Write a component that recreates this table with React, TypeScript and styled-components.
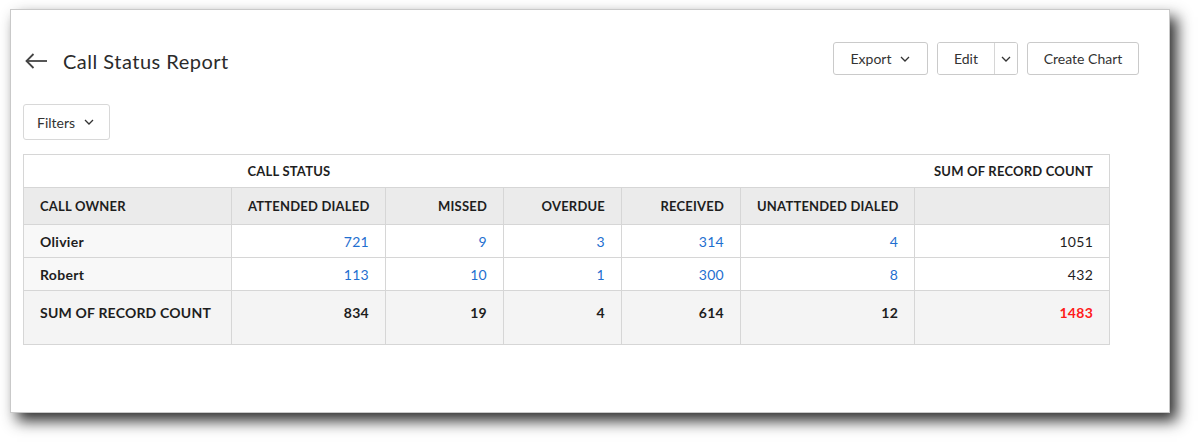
import React from 'react';
import styled, { createGlobalStyle } from 'styled-components';

const GlobalStyle = createGlobalStyle`
  html, body {
    margin: 0;
    padding: 0;
    background: #ffffff;
    font-family: Lato, "Open Sans", Arial, sans-serif;
  }
`;

const Page = styled.div`
  padding: 9px 0 0 10px;
  height: 444px;
  box-sizing: border-box;
  overflow: hidden;
`;

const Card = styled.div`
  width: 1160px;
  height: 404px;
  box-sizing: border-box;
  background: #fff;
  border: 1px solid #c9c9c9;
  box-shadow: 7px 8px 14px rgba(0, 0, 0, 0.82);
  display: flex;
  flex-direction: column;
  padding: 32px 30px 0 12px;
`;

const Header = styled.div`
  display: flex;
  justify-content: space-between;
  align-items: flex-start;
`;

const TitleWrap = styled.div`
  display: flex;
  align-items: center;
  gap: 15px;
  margin-top: 5px;
  height: 28px;
  padding-left: 2px;
`;

const Title = styled.h1`
  margin: 0;
  font-size: 20px;
  font-weight: 400;
  color: #2b2b2b;
  letter-spacing: 0.5px;
`;

const Actions = styled.div`
  display: flex;
  gap: 9px;
`;

const Btn = styled.button<{ $w?: number }>`
  height: 33px;
  width: ${(p) => (p.$w ? `${p.$w}px` : 'auto')};
  box-sizing: border-box;
  border: 1px solid #cacaca;
  border-radius: 3px;
  background: #fff;
  color: #333;
  font-family: inherit;
  font-size: 14px;
  display: flex;
  align-items: center;
  justify-content: center;
  gap: 9px;
  padding: 0;
  cursor: pointer;
`;

const Split = styled.div`
  display: flex;
  height: 33px;
  width: 81px;
  box-sizing: border-box;
  border: 1px solid #cacaca;
  border-radius: 3px;
  overflow: hidden;
`;

const SplitPart = styled.button<{ $w: number; $divider?: boolean }>`
  width: ${(p) => p.$w}px;
  border: none;
  border-left: ${(p) => (p.$divider ? '1px solid #d6d6d6' : 'none')};
  background: #fff;
  color: #333;
  font-family: inherit;
  font-size: 14px;
  display: flex;
  align-items: center;
  justify-content: center;
  padding: 0;
`;

const FilterBtn = styled.button`
  margin-top: 29px;
  width: 87px;
  height: 36px;
  box-sizing: border-box;
  border: 1px solid #d8d8d8;
  border-radius: 3px;
  background: #fff;
  color: #333;
  font-family: inherit;
  font-size: 14px;
  display: flex;
  align-items: center;
  gap: 9px;
  padding: 0 0 0 13px;
`;

const Table = styled.table`
  margin-top: 14px;
  width: 1086px;
  border-collapse: collapse;
  table-layout: fixed;
  border: 1px solid #d6d6d6;
  font-size: 14px;
  color: #1e1e1e;
`;

const Th = styled.th<{ $align?: string; $bordered?: boolean }>`
  height: ${(p) => (p.$bordered ? '37px' : '33px')};
  padding: 0 16px;
  box-sizing: border-box;
  font-size: 13px;
  font-weight: 700;
  letter-spacing: 0.2px;
  text-transform: uppercase;
  text-align: ${(p) => p.$align || 'right'};
  background: ${(p) => (p.$bordered ? '#ebebeb' : '#fff')};
  border-top: 1px solid #d6d6d6;
  border-left: ${(p) => (p.$bordered ? '1px solid #d6d6d6' : 'none')};
  white-space: nowrap;
`;

const Td = styled.td<{ $kind?: 'owner' | 'link' | 'plain' | 'sum' | 'total'; $sumRow?: boolean }>`
  height: ${(p) => (p.$sumRow ? '54px' : '33px')};
  padding: ${(p) => (p.$sumRow ? '13px 16px 0' : '0 16px')};
  vertical-align: ${(p) => (p.$sumRow ? 'top' : 'middle')};
  box-sizing: border-box;
  text-align: ${(p) => (p.$kind === 'owner' ? 'left' : 'right')};
  border: 1px solid #d6d6d6;
  background: ${(p) => (p.$sumRow ? '#f4f4f4' : p.$kind === 'owner' ? '#f8f8f8' : '#fff')};
  color: ${(p) =>
    p.$kind === 'link' ? '#1f6fd0' : p.$kind === 'total' ? '#ff1a1a' : '#1e1e1e'};
  font-weight: ${(p) => (p.$sumRow || p.$kind === 'owner' ? 700 : 400)};
  letter-spacing: ${(p) => (p.$sumRow && p.$kind === 'owner' ? '0.2px' : '0.3px')};
  white-space: nowrap;
`;

const Chevron = () => (
  <svg width="10" height="6" viewBox="0 0 10 6" fill="none">
    <polyline points="1,1 5,5 9,1" stroke="#333" strokeWidth="1.3" />
  </svg>
);

const BackArrow = () => (
  <svg width="23" height="16" viewBox="0 0 23 16" fill="none">
    <line x1="1" y1="8" x2="22" y2="8" stroke="#444" strokeWidth="1.8" />
    <polyline points="8.5,1 1.5,8 8.5,15" stroke="#444" strokeWidth="1.8" fill="none" />
  </svg>
);

const columns = ['Attended Dialed', 'Missed', 'Overdue', 'Received', 'Unattended Dialed'];
const widths = [208, 154, 118, 118, 119, 174, 195];

const rows = [
  { owner: 'Olivier', values: [721, 9, 3, 314, 4], total: 1051 },
  { owner: 'Robert', values: [113, 10, 1, 300, 8], total: 432 },
];

const sums = [834, 19, 4, 614, 12];

export default function App() {
  return (
    <Page>
      <GlobalStyle />
      <Card>
        <Header>
          <TitleWrap>
            <BackArrow />
            <Title>Call Status Report</Title>
          </TitleWrap>
          <Actions>
            <Btn $w={95}>
              Export <Chevron />
            </Btn>
            <Split>
              <SplitPart $w={56}>Edit</SplitPart>
              <SplitPart $w={23} $divider>
                <Chevron />
              </SplitPart>
            </Split>
            <Btn $w={112}>Create Chart</Btn>
          </Actions>
        </Header>

        <FilterBtn>
          Filters <Chevron />
        </FilterBtn>

        <Table>
          <colgroup>
            {widths.map((w, i) => (
              <col key={i} style={{ width: w }} />
            ))}
          </colgroup>
          <thead>
            <tr>
              <Th />
              <Th colSpan={5} $align="left">
                Call Status
              </Th>
              <Th>Sum of Record Count</Th>
            </tr>
            <tr>
              <Th $bordered $align="left">
                Call Owner
              </Th>
              {columns.map((c) => (
                <Th key={c} $bordered>
                  {c}
                </Th>
              ))}
              <Th $bordered />
            </tr>
          </thead>
          <tbody>
            {rows.map((r) => (
              <tr key={r.owner}>
                <Td $kind="owner">{r.owner}</Td>
                {r.values.map((v, i) => (
                  <Td key={i} $kind="link">
                    {v}
                  </Td>
                ))}
                <Td $kind="plain">{r.total}</Td>
              </tr>
            ))}
            <tr>
              <Td $kind="owner" $sumRow>
                SUM OF RECORD COUNT
              </Td>
              {sums.map((v, i) => (
                <Td key={i} $kind="sum" $sumRow>
                  {v}
                </Td>
              ))}
              <Td $kind="total" $sumRow>
                1483
              </Td>
            </tr>
          </tbody>
        </Table>
      </Card>
    </Page>
  );
}
